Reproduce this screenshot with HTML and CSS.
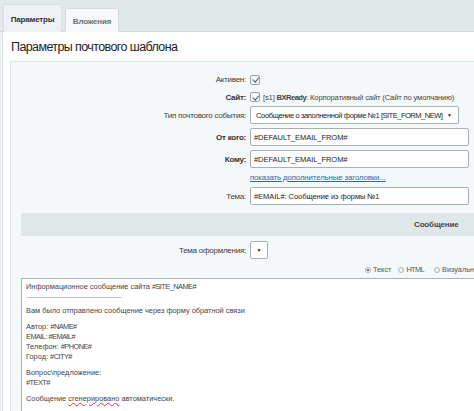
FILE: index.html
```html
<!DOCTYPE html>
<html lang="ru">
<head>
<meta charset="utf-8">
<link rel="stylesheet" href="styles.css">
</head>
<body>
<div class="page">
  <div class="tabbar">
    <div class="tab tab-active">Параметры</div>
    <div class="tab tab-other">Вложения</div>
  </div>
  <div class="panel">
    <h1 class="title">Параметры почтового шаблона</h1>
    <div class="box">
      <div class="form">
        <div class="label">Активен:</div>
        <div class="field"><span class="check"></span></div>

        <div class="label bold">Сайт:</div>
        <div class="field"><span class="check"></span><span class="site">[s1] <b class="nar">BXReady</b>: Корпоративный сайт (Сайт по умолчанию)</span></div>

        <div class="label">Тип почтового события:</div>
        <div class="field"><div class="select wide"><span>Сообщение о заполненной форме №1 <span class="nar">[SITE_FORM_NEW]</span></span><span class="arrow">▼</span></div></div>

        <div class="label bold">От кого:</div>
        <div class="field"><div class="input">#DEFAULT_EMAIL_FROM#</div></div>

        <div class="label bold">Кому:</div>
        <div class="field"><div class="input">#DEFAULT_EMAIL_FROM#</div></div>

        <div class="label"></div>
        <div class="field"><a class="link" href="#">показать дополнительные заголовки...</a></div>

        <div class="label">Тема:</div>
        <div class="field"><div class="input">#EMAIL#: Сообщение из формы №1</div></div>
      </div>

      <div class="bar"><span class="bar-title">Сообщение</span></div>

      <div class="form2">
        <div class="label">Тема оформления:</div>
        <div class="field"><div class="select small"><span class="arrow">▼</span></div></div>
      </div>

      <div class="radios">
        <span class="radio on"></span><span class="rlabel">Текст</span>
        <span class="radio"></span><span class="rlabel r2"><span class="nar">HTML</span></span>
        <span class="radio"></span><span class="rlabel">Визуальный редактор</span>
      </div>

      <div class="textarea">
        <div class="ln">Информационное сообщение сайта <span class="nar">#SITE_NAME#</span></div>
        <div class="ln dash">--------------------------------------------</div>
        <div class="ln">Вам было отправлено сообщение через форму обратной связи</div>
        <div class="gap"></div>
        <div class="ln">Автор: <span class="nar">#NAME#</span></div>
        <div class="ln"><span class="nar">EMAIL: #EMAIL#</span></div>
        <div class="ln">Телефон: <span class="nar">#PHONE#</span></div>
        <div class="ln">Город: <span class="nar">#CITY#</span></div>
        <div class="gap"></div>
        <div class="ln">Вопрос\предложение:</div>
        <div class="ln"><span class="nar">#TEXT#</span></div>
        <div class="gap"></div>
        <div class="ln">Сообщение <span class="spell">сгенерировано</span> автоматически.</div>
      </div>
    </div>
  </div>
</div>
</body>
</html>
```
FILE: styles.css
```css
html, body {
  margin: 0;
  padding: 0;
  overflow: hidden;
  background: #eef2f4;
}
body {
  font-family: "Liberation Sans", Arial, sans-serif;
  color: #333;
  width: 474px;
  height: 411px;
}
.page {
  width: 560px;
}
.nar {
  letter-spacing: -0.55px;
}
.tabbar {
  height: 32px;
  background: #e1e8ea;
  border-bottom: 1px solid #cfd8db;
  box-sizing: border-box;
  display: flex;
  align-items: flex-end;
  padding-left: 3px;
  gap: 3px;
}
.tab {
  font-size: 8px;
  font-weight: bold;
  letter-spacing: -0.2px;
  box-sizing: border-box;
  display: flex;
  align-items: center;
  justify-content: center;
  border-radius: 2px 2px 0 0;
  margin-bottom: -1px;
}
.tab-active {
  height: 28px;
  width: 59px;
  color: #333;
  background: #eef2f4;
  border: 1px solid #d7dfe2;
  border-bottom: none;
  padding-top: 1px;
}
.tab-other {
  height: 24px;
  width: 54px;
  color: #6b7478;
  background: #f6f8f9;
  border: 1px solid #d3dcdf;
  border-bottom: none;
  padding-top: 1px;
}
.panel {
  background: #ffffff;
  margin-left: 2px;
  border-left: 1px solid #dde3e6;
  padding-top: 6px;
}
.title {
  margin: 0 0 0 8px;
  font-size: 12.5px;
  letter-spacing: -0.6px;
  font-weight: normal;
  color: #222;
  height: 23px;
  line-height: 18px;
}
.box {
  margin-left: 7px;
  background: #f5f8f9;
  border: 1px solid #dfe6e8;
  padding: 9px 0 0 10px;
  height: 360px;
}
.form {
  display: grid;
  grid-template-columns: 225px 1fr;
  grid-template-rows: 17px 18px 18px 26px 18px 18px 20px;
  column-gap: 4px;
  align-items: center;
}
.form2 {
  margin-top: 5px;
  display: grid;
  grid-template-columns: 225px 1fr;
  grid-template-rows: 18px;
  column-gap: 4px;
  align-items: center;
}
.label {
  text-align: right;
  font-size: 8px;
  letter-spacing: -0.25px;
  color: #3c3c3c;
}
.bold {
  font-weight: bold;
  color: #333;
}
.field {
  display: flex;
  align-items: center;
  gap: 3px;
}
.check {
  width: 8px;
  height: 8px;
  border: 1px solid #9aa4a8;
  border-radius: 2px;
  background: #f3f5f6;
  position: relative;
  flex: none;
}
.check::after {
  content: "";
  position: absolute;
  left: 2.5px;
  top: 0.5px;
  width: 2.5px;
  height: 4.5px;
  border-right: 1.2px solid #555;
  border-bottom: 1.2px solid #555;
  transform: rotate(40deg);
}
.site {
  font-size: 7.6px;
  letter-spacing: -0.15px;
  color: #444;
}
.select, .input {
  height: 18px;
  box-sizing: border-box;
  background: #fff;
  border: 1px solid #a8b0b4;
  border-radius: 2px;
  color: #222;
  display: flex;
  align-items: center;
  white-space: nowrap;
}
.select.wide {
  width: 209px;
  justify-content: space-between;
  padding: 0 6px 0 5px;
  font-size: 7.6px;
  letter-spacing: -0.4px;
}
.select.small {
  width: 18px;
  justify-content: center;
}
.arrow {
  font-size: 5px;
  color: #222;
  letter-spacing: 0;
}
.input {
  width: 219px;
  padding: 0 3px;
  font-size: 7.5px;
  letter-spacing: -0.05px;
}
.link {
  font-size: 7.8px;
  letter-spacing: -0.1px;
  color: #2f6aa9;
  text-decoration: underline;
}
.bar {
  margin-top: 7px;
  height: 23px;
  background: #e0e7e9;
  display: flex;
  align-items: center;
  padding-left: 393px;
}
.bar-title {
  font-size: 8px;
  letter-spacing: -0.15px;
  font-weight: bold;
  color: #444;
}
.radios {
  height: 19px;
  box-sizing: border-box;
  padding-top: 2px;
  display: flex;
  align-items: center;
  padding-left: 344px;
  font-size: 7.3px;
  color: #555;
}
.radio {
  width: 4px;
  height: 4px;
  border: 1px solid #aab2b5;
  border-radius: 50%;
  background: #f0f2f3;
  margin-right: 2px;
  position: relative;
  flex: none;
}
.radio.on::after {
  content: "";
  position: absolute;
  left: 1px;
  top: 1px;
  width: 2px;
  height: 2px;
  border-radius: 50%;
  background: #444;
}
.rlabel {
  margin-right: 7px;
}
.r2 {
  margin-right: 10px;
}
.textarea {
  background: #fff;
  border: 1px solid #a9b1b4;
  height: 200px;
  padding: 3px 4px;
  font-size: 7.4px;
  color: #444;
}
.ln {
  line-height: 10px;
  white-space: nowrap;
}
.dash {
  letter-spacing: -0.3px;
  line-height: 9px;
  height: 14px;
  color: #8a8a8a;
}
.gap {
  height: 6px;
}
.spell {
  text-decoration: underline wavy #d33;
  text-decoration-thickness: 0.5px;
}
```
